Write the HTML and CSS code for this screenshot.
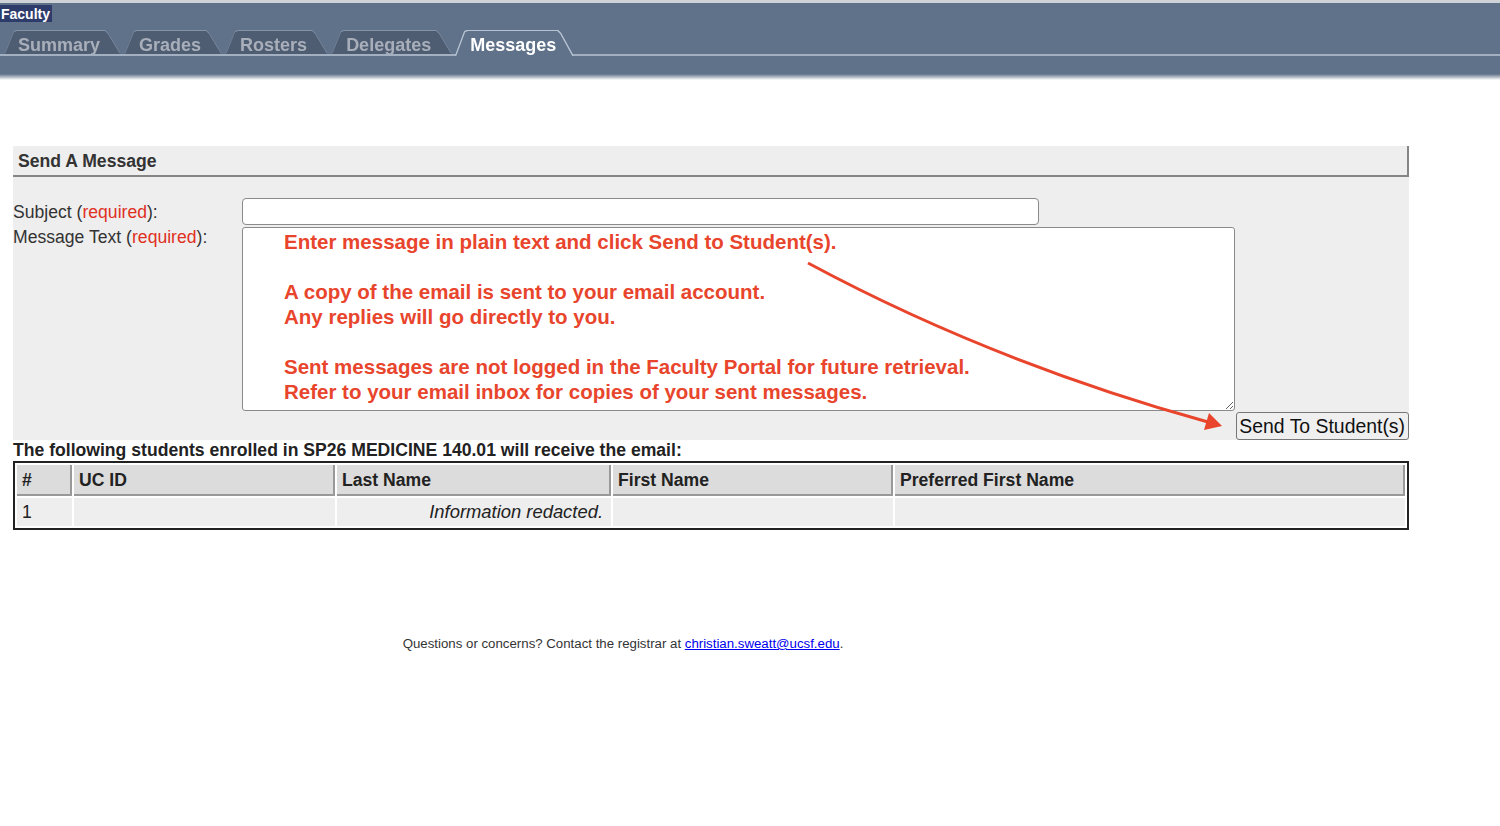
FILE: index.html
```html
<!DOCTYPE html>
<html lang="en">
<head>
    <meta charset="UTF-8">
    <title>Faculty Portal - Messages</title>
    <link rel="stylesheet" href="styles.css">
</head>
<body>
    <div class="header">
        <div class="faculty">Faculty</div>
        <ul class="tabs">
            <li class="tab"><a href="#">Summary</a></li>
            <li class="tab"><a href="#">Grades</a></li>
            <li class="tab"><a href="#">Rosters</a></li>
            <li class="tab"><a href="#">Delegates</a></li>
            <li class="tab active"><a href="#">Messages</a></li>
        </ul>
    </div>

    <div class="panel">
        <div class="panel-title">Send A Message</div>
        <form class="message-form">
            <div class="form-row subject-row">
                <label for="subject">Subject (<span class="req">required</span>):</label>
                <input type="text" id="subject" name="subject">
            </div>
            <div class="form-row">
                <label for="body" class="msg-label">Message Text (<span class="req">required</span>):</label>
                <textarea id="body" name="body" class="msg-text">Enter message in plain text and click Send to Student(s).

A copy of the email is sent to your email account.
Any replies will go directly to you.

Sent messages are not logged in the Faculty Portal for future retrieval.
Refer to your email inbox for copies of your sent messages.</textarea>
            </div>
            <div class="button-row">
                <button type="submit">Send To Student(s)</button>
            </div>
        </form>
    </div>

    <div class="recipients">The following students enrolled in SP26 MEDICINE 140.01 will receive the email:</div>
    <table class="roster">
        <thead>
            <tr>
                <th class="col-num">#</th>
                <th class="col-id">UC ID</th>
                <th class="col-last">Last Name</th>
                <th class="col-first">First Name</th>
                <th>Preferred First Name</th>
            </tr>
        </thead>
        <tbody>
            <tr>
                <td>1</td>
                <td></td>
                <td class="redacted">Information redacted.</td>
                <td></td>
                <td></td>
            </tr>
        </tbody>
    </table>

    <div class="footer">
        Questions or concerns? Contact the registrar at <a href="mailto:christian.sweatt@ucsf.edu">christian.sweatt@ucsf.edu</a>.
    </div>

    <!-- annotation arrow -->
    <svg class="arrow" width="1500" height="826" viewBox="0 0 1500 826">
        <path d="M808 263 Q992 362 1208 422" fill="none" stroke="#e8452c" stroke-width="3"/>
        <polygon points="1222,426 1204,430 1209,413" fill="#e8452c"/>
    </svg>
</body>
</html>
```

FILE: styles.css
```css
body {
    margin: 0;
    font-family: "Liberation Sans", Arial, sans-serif;
    color: #333;
    position: relative;
    background: #fff;
}
.header {
    height: 80px;
    background: linear-gradient(to bottom, #cfd3d8 0, #cfd3d8 3px, #607289 3px, #607289 74px, #fff 80px);
    overflow: hidden;
}
.faculty {
    display: inline-block;
    margin-top: 5px;
    padding: 1px 2px 0 1px;
    background-color: #2e3c6c;
    color: #fff;
    font-weight: bold;
    font-size: 14px;
    line-height: 16px;
}
.tabs {
    display: flex;
    align-items: flex-start;
    list-style: none;
    margin: 8px 0 0 0;
    padding: 0 0 0 5px;
    height: 23px;
    border-bottom: 2px solid #a3b0c2;
}
.tab {
    margin-right: 5px;
    filter: drop-shadow(0 -1px 0 #8693a7);
}
.tab a {
    display: block;
    height: 23px;
    padding: 0 20px 0 14px;
    font-weight: bold;
    font-size: 18px;
    line-height: 28px;
    color: #a8afba;
    text-decoration: none;
    background-color: #4f5d72;
    clip-path: polygon(0 100%, 9px 1px, 12px 0, calc(100% - 15px) 0, calc(100% - 12px) 3px, 100% 100%);
}
.tab:first-child a {
    padding-left: 13px;
}
.tab.active {
    filter: drop-shadow(0 -1px 0 #b8c3d2) drop-shadow(1px 0 0 #b8c3d2) drop-shadow(-1px 0 0 #b8c3d2);
}
.tab.active a {
    height: 25px;
    margin-bottom: -2px;
    padding-right: 16px;
    color: #fff;
    background-color: #607289;
}
.panel {
    margin: 66px 0 0 13px;
    width: 1396px;
    background-color: #eee;
}
.panel-title {
    height: 29px;
    padding-left: 5px;
    border-bottom: 2px solid #858585;
    border-right: 2px solid #858585;
    font-weight: bold;
    font-size: 17.6px;
    line-height: 30px;
    color: #333;
}
.form-row {
    display: flex;
}
.subject-row {
    margin-top: 21px;
    align-items: center;
}
.form-row label {
    width: 229px;
    font-size: 17.6px;
    line-height: 22px;
    color: #333;
}
.form-row label.msg-label {
    padding-top: 1px;
}
.req {
    color: #e0301e;
}
input[type="text"] {
    width: 797px;
    height: 27px;
    box-sizing: border-box;
    border: 1px solid #8a8a8a;
    border-radius: 4px;
    background: #fff;
}
.msg-text {
    width: 993px;
    height: 184px;
    margin-top: 2px;
    box-sizing: border-box;
    padding: 1px 0 0 41px;
    border: 1px solid #8a8a8a;
    border-radius: 3px;
    background: #fff;
    color: #e8452c;
    font-family: "Liberation Sans", Arial, sans-serif;
    font-weight: bold;
    font-size: 20.5px;
    line-height: 25px;
    overflow: hidden;
}
.button-row {
    display: flex;
    justify-content: flex-end;
    margin-top: 1px;
}
button {
    height: 28px;
    padding: 0 3px 0 2px;
    font-family: "Liberation Sans", Arial, sans-serif;
    font-size: 19.4px;
    color: #111;
    background-color: #efefef;
    border: 1px solid #767676;
    border-radius: 3px;
}
.recipients {
    margin-left: 13px;
    font-weight: bold;
    font-size: 17.6px;
    line-height: 21px;
    color: #222;
}
.roster {
    margin-left: 13px;
    width: 1396px;
    border: 2px solid #222;
    border-spacing: 2px;
    font-size: 17.6px;
    line-height: 20px;
    color: #222;
}
.roster th {
    height: 28px;
    padding: 1px 0 0 5px;
    text-align: left;
    background-color: #dcdcdc;
    border-right: 2px solid #999;
    border-bottom: 2px solid #999;
}
.roster td {
    height: 28px;
    padding: 0 0 0 5px;
    background-color: #eee;
}
.col-num { width: 48px; }
.col-id { width: 254px; }
.col-last { width: 267px; }
.col-first { width: 273px; }
.roster td.redacted {
    text-align: right;
    font-style: italic;
    font-size: 18.4px;
    padding-right: 8px;
}
.footer {
    width: 1246px;
    margin-top: 106px;
    text-align: center;
    font-size: 13.25px;
    color: #333;
}
.footer a {
    color: #00e;
}
.arrow {
    position: absolute;
    top: 0;
    left: 0;
    pointer-events: none;
}
```
